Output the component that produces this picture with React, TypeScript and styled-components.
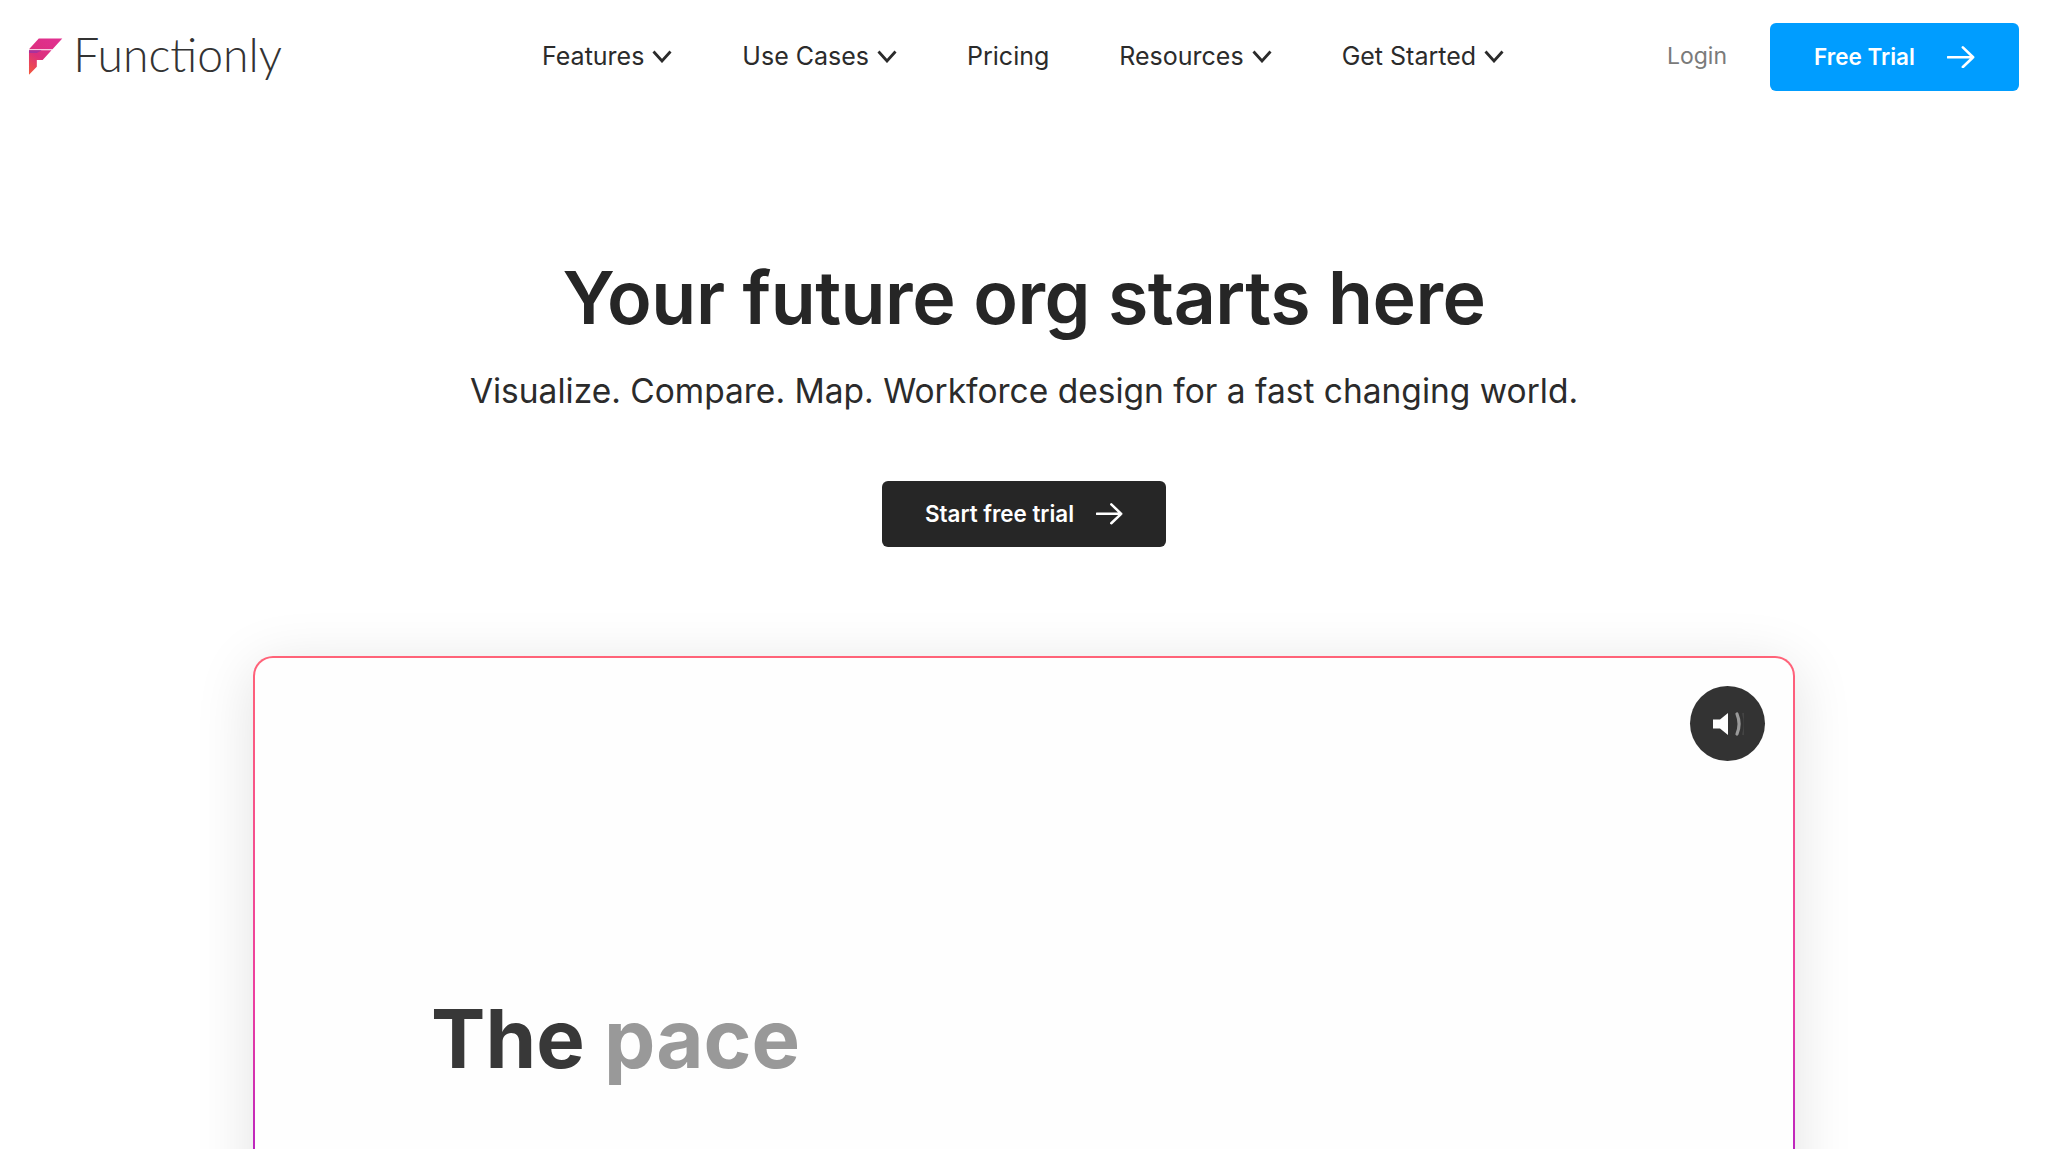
import React from "react";
import styled, { createGlobalStyle } from "styled-components";

const GlobalStyle = createGlobalStyle`
  html, body {
    margin: 0;
    padding: 0;
    height: 100%;
    overflow: hidden;
    background: #fff;
    font-family: Inter, "Liberation Sans", sans-serif;
  }
`;

const navItems = [
  { label: "Features", menu: true },
  { label: "Use Cases", menu: true },
  { label: "Pricing", menu: false },
  { label: "Resources", menu: true },
  { label: "Get Started", menu: true },
];

const Chevron = () => (
  <svg width="20" height="13" viewBox="0 0 20 13" fill="none">
    <path d="M1.5 1.5L10 11L18.5 1.5" stroke="#2b2b2b" strokeWidth="2.8" />
  </svg>
);

const Arrow = ({ size }: { size: number }) => (
  <svg width={size} height={size * 0.8} viewBox="0 0 30 24" fill="none">
    <path
      d="M1 12H28M17 1.5L28 12L17 22.5"
      stroke="#fff"
      strokeWidth="2.8"
      strokeLinecap="round"
      strokeLinejoin="round"
    />
  </svg>
);

const LogoMark = () => (
  <svg width="36" height="40" viewBox="0 0 36 40">
    <defs>
      <linearGradient id="logoGrad" x1="0.7" y1="0" x2="0.1" y2="1">
        <stop offset="0" stopColor="#e0308f" />
        <stop offset="0.55" stopColor="#dc2f7c" />
        <stop offset="1" stopColor="#f2563f" />
      </linearGradient>
    </defs>
    <path
      d="M11 1H35L25 12H1Z M1 13H24L15 23H9V30L1 38Z"
      fill="url(#logoGrad)"
    />
    <path d="M1 13H14L9 16H1Z" fill="#a8329c" />
  </svg>
);

export default function App(): JSX.Element {
  return (
    <Page>
      <GlobalStyle />
      <Header>
        <Logo>
          <LogoMark />
          <LogoText>Functionly</LogoText>
        </Logo>
        <Nav>
          {navItems.map((item) => (
            <NavItem key={item.label}>
              {item.label}
              {item.menu && <Chevron />}
            </NavItem>
          ))}
        </Nav>
        <Actions>
          <Login>Login</Login>
          <TrialButton>
            <ButtonLabel>Free Trial</ButtonLabel>
            <Arrow size={28} />
          </TrialButton>
        </Actions>
      </Header>
      <Hero>
        <Title>Your future org starts here</Title>
        <Subtitle>
          Visualize. Compare. Map. Workforce design for a fast changing world.
        </Subtitle>
        <StartButton>
          <ButtonLabel>Start free trial</ButtonLabel>
          <Arrow size={27} />
        </StartButton>
      </Hero>
      <VideoCard>
        <SoundButton>
          <svg width="32" height="28" viewBox="0 0 32 28" fill="none">
            <path d="M1 9.5H8L16 3V25L8 18.5H1Z" fill="#fff" />
            <path
              d="M25 4C27.5 10 27.5 18 25 24"
              stroke="#9a9a9a"
              strokeWidth="3.2"
              strokeLinecap="round"
            />
            <path
              d="M31 3C33 10 33 18 31 25"
              stroke="#444"
              strokeWidth="2"
            />
          </svg>
        </SoundButton>
        <Caption>
          The <Faded>pace</Faded>
        </Caption>
      </VideoCard>
    </Page>
  );
}

const Page = styled.div`
  height: 100vh;
  overflow: hidden;
  background: #fff;
`;

const Header = styled.header`
  display: flex;
  align-items: center;
  height: 68px;
  padding: 23px 29px 0 28px;
`;

const Logo = styled.div`
  display: flex;
  align-items: center;
  flex-shrink: 0;
  gap: 10px;
  width: 254px;
`;

const LogoText = styled.span`
  margin-bottom: 5px;
  font-family: Lato, sans-serif;
  font-weight: 300;
  font-size: 46.3px;
  line-height: 1;
  color: #333;
`;

const Nav = styled.nav`
  display: flex;
  align-items: center;
  gap: 70px;
  margin-left: 260px;
  padding-bottom: 2px;
`;

const NavItem = styled.a`
  display: flex;
  align-items: center;
  gap: 8px;
  font-size: 25px;
  color: #2b2b2b;
  white-space: nowrap;
`;

const Actions = styled.div`
  display: flex;
  align-items: center;
  gap: 43px;
  margin-left: auto;
`;

const Login = styled.a`
  padding-bottom: 2px;
  font-size: 23px;
  color: #7a7a7a;
`;

const ButtonLabel = styled.span`
  padding-bottom: 2px;
`;

const TrialButton = styled.button`
  display: flex;
  align-items: center;
  justify-content: center;
  gap: 32px;
  width: 249px;
  height: 68px;
  padding: 0;
  border: 0;
  border-radius: 6px;
  background: #009dff;
  color: #fff;
  font-family: inherit;
  font-size: 22.5px;
  font-weight: 600;
`;

const Hero = styled.section`
  display: flex;
  flex-direction: column;
  align-items: center;
  padding-top: 162px;
`;

const Title = styled.h1`
  margin: 0;
  font-size: 73.5px;
  line-height: 90px;
  font-weight: 600;
  letter-spacing: -0.5px;
  color: #262626;
`;

const Subtitle = styled.p`
  margin: 25px 0 0;
  font-size: 33.5px;
  line-height: 46px;
  color: #2b2b2b;
`;

const StartButton = styled.button`
  display: flex;
  align-items: center;
  justify-content: center;
  gap: 22px;
  width: 284px;
  height: 66px;
  margin-top: 67px;
  padding: 0;
  border: 0;
  border-radius: 6px;
  background: #262626;
  color: #fff;
  font-family: inherit;
  font-size: 22.4px;
  font-weight: 600;
`;

const VideoCard = styled.div`
  position: relative;
  display: flex;
  align-items: flex-end;
  box-sizing: border-box;
  width: 1542px;
  height: 860px;
  margin: 109px auto 0 253px;
  padding: 0 0 425px 176px;
  border: 2px solid transparent;
  border-radius: 20px;
  background: linear-gradient(#fefefe, #fefefe) padding-box,
    linear-gradient(180deg, #ff6378 0%, #ec3fa0 40%, #b01fc6 62%, #8a2bd0 100%)
      border-box;
  box-shadow: 0 10px 60px rgba(0, 0, 0, 0.12);
`;

const SoundButton = styled.div`
  position: absolute;
  top: 28px;
  right: 28px;
  display: flex;
  align-items: center;
  justify-content: center;
  width: 75px;
  height: 75px;
  border-radius: 50%;
  background: #333;
`;

const Caption = styled.div`
  font-size: 81.5px;
  line-height: 100px;
  font-weight: 700;
  color: #383838;
`;

const Faded = styled.span`
  color: #999;
`;
